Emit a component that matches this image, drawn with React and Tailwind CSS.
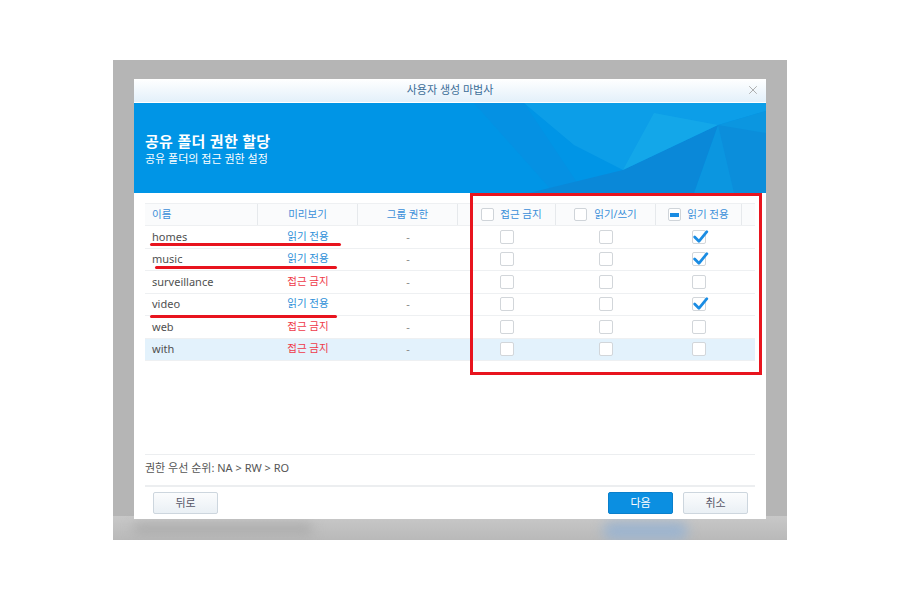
import React from 'react';
import { X } from 'lucide-react';

const rows = [
  { name: 'homes', preview: '읽기 전용', ro: true },
  { name: 'music', preview: '읽기 전용', ro: true },
  { name: 'surveillance', preview: '접근 금지', ro: false },
  { name: 'video', preview: '읽기 전용', ro: true },
  { name: 'web', preview: '접근 금지', ro: false },
  { name: 'with', preview: '접근 금지', ro: false, selected: true },
];

const font = { fontFamily: '"Noto Sans", "Noto Sans CJK KR", sans-serif' };

const Box = ({ checked }) => (
  <div className="relative w-[14px] h-[14px] border border-[#d2d6da] rounded-[2px] bg-white">
    {checked && (
      <svg viewBox="0 0 16 16" className="absolute -left-[1px] -top-[3px] w-[17px] h-[17px]">
        <path d="M2.5 8.5 L6.5 12.5 L14 3.5" fill="none" stroke="#1a8ce3" strokeWidth="2.6" strokeLinecap="round" strokeLinejoin="round" />
      </svg>
    )}
  </div>
);

const HeadBox = ({ indeterminate }) => (
  <div className="w-[13px] h-[13px] border border-[#cfd4d9] rounded-[2px] bg-white flex items-center justify-center">
    {indeterminate && <div className="w-[9px] h-[4px] bg-[#1a8ce3]" />}
  </div>
);

const Underline = ({ className }) => (
  <div className={`absolute h-[3px] rounded-full bg-[#e8141e] ${className}`} />
);

const Btn = ({ children, primary }) => (
  <button
    className={`w-[65px] h-[22px] rounded-[2px] text-[11px] ${
      primary
        ? 'bg-[#0b8fe1] text-white border border-[#0a7fcb]'
        : 'bg-gradient-to-b from-[#fbfcfd] to-[#eaf0f5] text-[#556] border border-[#cdd6de]'
    }`}
  >
    {children}
  </button>
);

export default function App() {
  return (
    <div className="w-[900px] h-[600px] bg-white pt-[60px]" style={font}>
      <div className="mx-auto w-[674px] h-[480px] bg-[#b5b5b5] pt-[19px] px-[21px] relative overflow-hidden">
        {/* blurred background under dialog */}
        <div className="absolute left-0 right-0 bottom-0 h-[24px] bg-gradient-to-b from-[#c8c8c8] to-[#b9b9b9]" />
        <div className="absolute left-[490px] bottom-[0px] w-[85px] h-[18px] rounded-full bg-[#9cb4cf] blur-[6px]" />
        <div className="absolute left-[20px] bottom-[6px] w-[180px] h-[10px] rounded-full bg-[#aaaaaa] blur-[6px]" />

        <div className="relative w-[632px] h-[440px] bg-white flex flex-col">
          {/* title bar */}
          <div className="h-[24px] bg-gradient-to-b from-white to-[#e3f0fa] flex items-center justify-center relative border-b border-white">
            <span className="text-[11px] text-[#3d6e98]">사용자 생성 마법사</span>
            <X className="absolute right-[6px] top-[4px] text-[#a9a9a9]" size={14} strokeWidth={1.6} />
          </div>

          {/* banner */}
          <div className="h-[90px] bg-[#0095e6] relative overflow-hidden flex flex-col justify-center pl-[11px] pt-[2px]">
            <svg className="absolute inset-0" width="632" height="90" viewBox="0 0 632 90">
              <polygon points="340,0 390,0 450,90 420,90" fill="#0a8ee0" opacity="0.5" />
              <polygon points="390,0 632,0 632,8 584,22 489,67 440,42" fill="#0fa0e8" opacity="0.8" />
              <polygon points="584,22 632,8 632,90 560,90" fill="#0b96e0" />
              <polygon points="489,67 584,22 560,90 395,90" fill="#0a88d8" />
              <polygon points="520,10 584,22 489,67" fill="#17abe9" opacity="0.7" />
              <polygon points="584,22 632,30 632,90 600,90" fill="#0b8edb" />
            </svg>
            <div className="relative text-white text-[15px] font-bold leading-[20px] tracking-[0.3px]">공유 폴더 권한 할당</div>
            <div className="relative text-white text-[11px] leading-[16px]">공유 폴더의 접근 권한 설정</div>
          </div>

          {/* table */}
          <div className="px-[11px] pt-[10px] relative">
            <div className="grid grid-cols-[113px_100px_100px_98px_100px_86px_13px] h-[23px] bg-[#fafbfc] border-y border-[#eef0f2] text-[10.5px] text-[#3a8fd9]">
              <div className="flex items-center pl-[7px] border-r border-[#e6e9ec]">이름</div>
              <div className="flex items-center justify-center border-r border-[#e6e9ec]">미리보기</div>
              <div className="flex items-center justify-center border-r border-[#e6e9ec]">그룹 권한</div>
              <div className="flex items-center justify-center gap-[6px] border-r border-[#e6e9ec] pl-[10px]">
                <HeadBox />접근 금지
              </div>
              <div className="flex items-center justify-center gap-[7px] border-r border-[#e6e9ec]">
                <HeadBox />읽기/쓰기
              </div>
              <div className="flex items-center justify-center gap-[6px] border-r border-[#e6e9ec]">
                <HeadBox indeterminate />읽기 전용
              </div>
              <div />
            </div>
            {rows.map((r) => (
              <div
                key={r.name}
                className={`grid grid-cols-[113px_100px_100px_98px_100px_86px_13px] h-[22.5px] border-b border-[#eef0f2] text-[11px] ${
                  r.selected ? 'bg-[#e3f2fc]' : ''
                }`}
              >
                <div className="flex items-center pl-[7px] text-[#505050]">{r.name}</div>
                <div className={`flex items-center justify-center text-[10.5px] ${r.ro ? 'text-[#2d8fd8]' : 'text-[#ef3a4a]'}`}>
                  {r.preview}
                </div>
                <div className="flex items-center justify-center text-[#888]">-</div>
                <div className="flex items-center justify-center"><Box /></div>
                <div className="flex items-center justify-center"><Box /></div>
                <div className="flex items-center justify-center"><Box checked={r.ro} /></div>
                <div />
              </div>
            ))}
            <Underline className="left-[16px] top-[50px] w-[191px]" />
            <Underline className="left-[21px] top-[73px] w-[182px]" />
            <Underline className="left-[16px] top-[122px] w-[187px]" />
          </div>

          <div className="flex-1" />

          {/* footer */}
          <div className="mx-[11px] h-[31px] border-t border-[#eceef0] flex items-center pb-[4px] text-[11px] text-[#555]">
            권한 우선 순위: NA &gt; RW &gt; RO
          </div>
          <div className="mx-[11px] h-[34px] border-t-2 border-[#eceef0] flex items-center justify-between pl-[8px] pr-[7px]">
            <Btn>뒤로</Btn>
            <div className="flex gap-[10px]">
              <Btn primary>다음</Btn>
              <Btn>취소</Btn>
            </div>
          </div>

          {/* annotation frame */}
          <div className="absolute left-[336px] top-[114px] w-[292px] h-[182px] border-[3px] border-[#e8141e] pointer-events-none" />
        </div>
      </div>
    </div>
  );
}
